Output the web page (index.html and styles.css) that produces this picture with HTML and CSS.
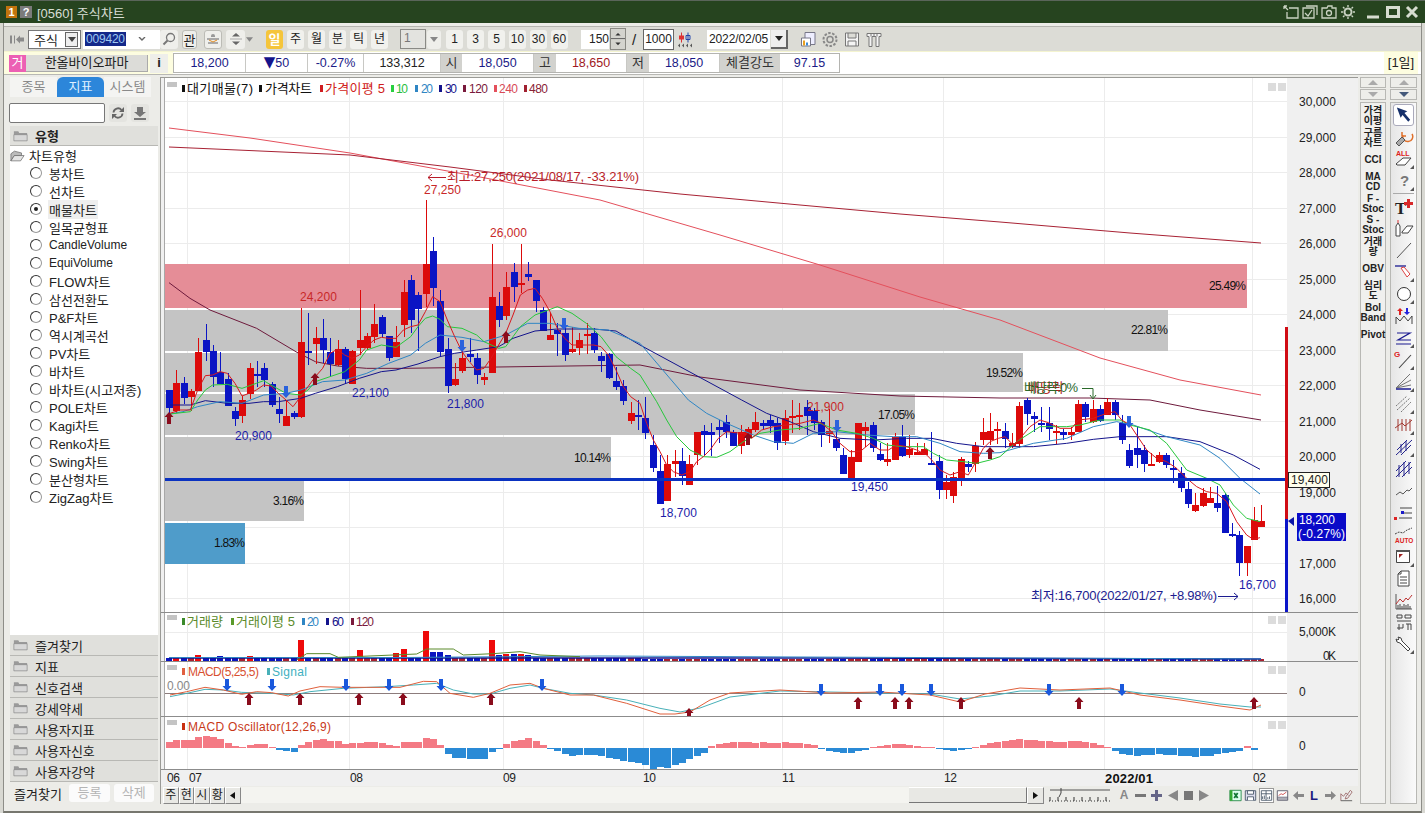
FILE: index.html
```html
<!DOCTYPE html>
<html lang="ko">
<head>
<meta charset="utf-8">
<title>[0560] 주식차트</title>
<link rel="stylesheet" href="styles.css">
</head>
<body>
<div class="app">
  <header class="title">
    <span class="badge b-or">1</span><span class="badge b-gr">?</span>
    <span class="title-text">[0560] 주식차트</span>
    <div class="win-btns">
      <svg class="wi" viewBox="0 0 16 14"><path d="M1 1l4 4M1 1h3M1 1v3M6 3h9v10H4V7" fill="none" stroke="#c9d2c2" stroke-width="1.3"/></svg>
      <svg class="wi" viewBox="0 0 16 14"><path d="M4 1h11v9M1 3h11v10H1zM3 8l3 3 4-6" fill="none" stroke="#c9d2c2" stroke-width="1.3"/></svg>
      <svg class="wi" viewBox="0 0 16 14"><path d="M1 3h5l1-2h4v2h4v10H1z" fill="none" stroke="#c9d2c2" stroke-width="1.3"/><circle cx="8" cy="8" r="2.5" fill="none" stroke="#c9d2c2" stroke-width="1.3"/></svg>
      <svg class="wi" viewBox="0 0 16 14"><circle cx="8" cy="7" r="3.5" fill="none" stroke="#c9d2c2" stroke-width="2"/><path d="M8 0v2M8 12v2M1 7h2M13 7h2M3 2l1.500 1.500M13 2l-1.500 1.500M3 12l1.500-1.500M13 12l-1.500-1.500" stroke="#c9d2c2" stroke-width="1.4"/></svg>
      <svg class="wc w-min" viewBox="0 0 14 14"><path d="M0 12h12" stroke="#d6dcd0" stroke-width="3"/></svg>
      <svg class="wc" viewBox="0 0 14 14"><path d="M1.500 2.500h11v9h-11z" fill="none" stroke="#d6dcd0" stroke-width="3"/></svg>
      <svg class="wc" viewBox="0 0 14 14"><path d="M2 2l10 10M12 2L2 12" stroke="#d6dcd0" stroke-width="3"/></svg>
    </div>
  </header>
  <div class="frame">
    <div class="toolbar">
      <div class="tb w16 ml1"><svg class="fill" viewBox="0 0 16 14"><path d="M1 3h2v8H1zM5 3h1v8H5zM7 7l4-4v2h4v4h-4v2z" fill="#8a8a8a"/></svg></div>
      <div class="combo w53 ml3"><span class="combo-t">주식</span><span class="combo-b"><svg viewBox="0 0 8 5" class="dn"><path d="M0 0h8L4 5z" fill="#444"/></svg></span></div>
      <div class="code w77 ml2"><span class="sel">009420</span><svg class="chev" viewBox="0 0 8 5"><path d="M1 0l3 3 3-3" fill="none" stroke="#666" stroke-width="1.400"/></svg></div>
      <div class="tb w18 pill"><svg class="ic14" viewBox="0 0 14 14"><circle cx="8.500" cy="5.500" r="4" fill="none" stroke="#777" stroke-width="1.300"/><path d="M5.500 8.500L1.500 12.500" stroke="#777" stroke-width="2"/></svg></div>
      <div class="tb w15 ml4 pill bd">관</div>
      <div class="tb w18 ml7 pill bd"><svg class="ic14" viewBox="0 0 14 14"><path d="M5 4a2 2 0 014 0v1H5z" fill="#999"/><path d="M1 6h12v2H1zM2 10h10v2H2z" fill="#aaa"/><path d="M3 8l4 2 4-2" fill="none" stroke="#e08a20"/></svg></div>
      <div class="tb w19 ml4 pill"><svg class="ic14" viewBox="0 0 14 14"><path d="M7 1l4 3.500H3zM7 13l-4-3.500h8z" fill="#666"/><path d="M1 7h12" stroke="#aaa"/></svg></div>
      <div class="tb w7 ml1"><svg class="dn" viewBox="0 0 8 5"><path d="M0 0h8L4 5z" fill="#888"/></svg></div>

      <div class="per on ml13">일</div><div class="per ml4">주</div><div class="per ml4">월</div><div class="per ml4">분</div><div class="per ml4">틱</div><div class="per ml4">년</div>

      <div class="num-in w26 ml12">1</div>
      <div class="tb w14 ml1 pill"><svg class="dn" viewBox="0 0 8 5"><path d="M0 0h8L4 5z" fill="#888"/></svg></div>
      <div class="per ml5">1</div><div class="per ml4">3</div><div class="per ml4">5</div><div class="per ml4">10</div><div class="per ml4">30</div><div class="per ml4">60</div>

      <div class="count w28 ml13">150</div>
      <div class="spin w16 ml1"><svg class="fill" viewBox="0 0 16 22"><path d="M0 10.500h16" stroke="#555"/><path d="M8 4l3 3H5zM8 18l-3-3h6z" fill="#333"/></svg></div>
      <div class="tb w16 slash">/</div>
      <div class="box w31 ml1">1000</div>
      <div class="tb w15 ml3"><svg class="fill" viewBox="0 0 15 18"><path d="M2 5h5v4H2z" fill="#d33"/><path d="M4.500 2v10" stroke="#d33"/><path d="M9 5h4v4H9z" fill="none" stroke="#24a"/><path d="M11 2v10" stroke="#24a"/><path d="M1 15l2-2v4zM5 15l2-2v4zM9 15l2-2v4zM13 15l2-2v4z" fill="#555"/></svg></div>
      <div class="date w63 ml15">2022/02/05</div>
      <div class="dbtn w17 ml1"><svg class="dn" viewBox="0 0 8 5"><path d="M0 0h8L4 5z" fill="#222"/></svg></div>
      <div class="tb w17 ml12"><svg class="fill" viewBox="0 0 17 18"><path d="M5 2h10v12H5z" fill="#eef" stroke="#778"/><path d="M1.500 7.500h9v8h-9z" fill="#fff" stroke="#778"/><path d="M3 10h2v5H3z" fill="#e8a020"/><path d="M6 12h2v3H6z" fill="#3a8ad8"/></svg></div>
      <div class="tb w18 ml4"><svg class="fill" viewBox="0 0 18 18"><circle cx="9" cy="9" r="3" fill="none" stroke="#888" stroke-width="1.500"/><circle cx="9" cy="9" r="6.500" fill="none" stroke="#888" stroke-width="2" stroke-dasharray="2.500 1.500"/></svg></div>
      <div class="tb w16 ml5"><svg class="fill" viewBox="0 0 16 18"><path d="M1.500 2.500h13v13h-13zM4 2.500v5h8v-5M4 15.500v-5h8v5" fill="#f4f4f4" stroke="#777"/></svg></div>
      <div class="tb w16 ml6"><svg class="fill" viewBox="0 0 16 18"><path d="M1 3h14v3h-2v10h-3V6H6v10H3V6H1z" fill="#f4f4f4" stroke="#777"/><path d="M5 3v3M8 3v3M11 3v3" stroke="#777"/></svg></div>
    </div>

    <div class="infobar">
      <div class="inf-left">
        <span class="tag">거</span>
        <div class="name">한올바이오파마</div>
        <div class="ibtn">i</div>
      </div>
      <div class="cells">
        <div class="cell navy c72">18,200</div>
        <div class="cell navy c62"><span class="down">▼</span>50</div>
        <div class="cell navy c56">-0.27%</div>
        <div class="cell dark c77">133,312</div>
        <div class="cell lab c21">시</div>
        <div class="cell navy c72">18,050</div>
        <div class="cell lab c22">고</div>
        <div class="cell dred c71">18,650</div>
        <div class="cell lab c22">저</div>
        <div class="cell navy c71">18,050</div>
        <div class="cell lab c60">체결강도</div>
        <div class="cell navy c59">97.15</div>
      </div>
      <div class="oneday">[1일]</div>
    </div>

    <div class="content">
      <aside class="side">
        <div class="tabs"><div class="tab">종목</div><div class="tab active">지표</div><div class="tab">시스템</div></div>
        <div class="search">
          <div class="search-in"></div>
          <div class="sbtn"><svg class="ic14" viewBox="0 0 14 14"><path d="M2.500 6.500A4.500 4.500 0 0110.500 4M11.500 7.500A4.500 4.500 0 013.500 10" fill="none" stroke="#666" stroke-width="1.800"/><path d="M13 1v5H8zM1 13V8h5z" fill="#666"/></svg></div>
          <div class="sbtn"><svg class="ic14" viewBox="0 0 14 14"><path d="M4 1h6v5h3l-6 5-6-5h3zM1 12h12v2H1z" fill="#777"/></svg></div>
        </div>
        <div class="acc acc-top"><svg class="folder" viewBox="0 0 17 13"><path d="M1 3V1h5l1 2h9v9H1z" fill="#9a9a9a"/><path d="M1 5h15v7H1z" fill="#d8d8d8" stroke="#777" stroke-width=".6"/></svg><b>유형</b></div>
        <div class="tree">
          <div class="tree-root"><svg class="folder" viewBox="0 0 17 13"><path d="M1 12V4l4-3 8 2v3H5z" fill="#bbb" stroke="#555" stroke-width=".7"/><path d="M1 12l4-6h11l-4 6z" fill="#e4e4e4" stroke="#555" stroke-width=".7"/></svg>차트유형</div>
          <div class="opt"><i class="radio"></i><span>봉차트</span></div>
          <div class="opt"><i class="radio"></i><span>선차트</span></div>
          <div class="opt sel-opt"><i class="radio on"></i><span>매물차트</span></div>
          <div class="opt"><i class="radio"></i><span>일목균형표</span></div>
          <div class="opt lat"><i class="radio"></i><span>CandleVolume</span></div>
          <div class="opt lat"><i class="radio"></i><span>EquiVolume</span></div>
          <div class="opt"><i class="radio"></i><span>FLOW차트</span></div>
          <div class="opt"><i class="radio"></i><span>삼선전환도</span></div>
          <div class="opt"><i class="radio"></i><span>P&amp;F차트</span></div>
          <div class="opt"><i class="radio"></i><span>역시계곡선</span></div>
          <div class="opt"><i class="radio"></i><span>PV차트</span></div>
          <div class="opt"><i class="radio"></i><span>바차트</span></div>
          <div class="opt"><i class="radio"></i><span>바차트(시고저종)</span></div>
          <div class="opt"><i class="radio"></i><span>POLE차트</span></div>
          <div class="opt"><i class="radio"></i><span>Kagi차트</span></div>
          <div class="opt"><i class="radio"></i><span>Renko차트</span></div>
          <div class="opt"><i class="radio"></i><span>Swing차트</span></div>
          <div class="opt"><i class="radio"></i><span>분산형차트</span></div>
          <div class="opt"><i class="radio"></i><span>ZigZag차트</span></div>
        </div>
        <div class="acc"><svg class="folder" viewBox="0 0 17 13"><path d="M1 3V1h5l1 2h9v9H1z" fill="#9a9a9a"/><path d="M1 5h15v7H1z" fill="#d8d8d8" stroke="#777" stroke-width=".6"/></svg>즐겨찾기</div>
        <div class="acc"><svg class="folder" viewBox="0 0 17 13"><path d="M1 3V1h5l1 2h9v9H1z" fill="#9a9a9a"/><path d="M1 5h15v7H1z" fill="#d8d8d8" stroke="#777" stroke-width=".6"/></svg>지표</div>
        <div class="acc"><svg class="folder" viewBox="0 0 17 13"><path d="M1 3V1h5l1 2h9v9H1z" fill="#9a9a9a"/><path d="M1 5h15v7H1z" fill="#d8d8d8" stroke="#777" stroke-width=".6"/></svg>신호검색</div>
        <div class="acc"><svg class="folder" viewBox="0 0 17 13"><path d="M1 3V1h5l1 2h9v9H1z" fill="#9a9a9a"/><path d="M1 5h15v7H1z" fill="#d8d8d8" stroke="#777" stroke-width=".6"/></svg>강세약세</div>
        <div class="acc"><svg class="folder" viewBox="0 0 17 13"><path d="M1 3V1h5l1 2h9v9H1z" fill="#9a9a9a"/><path d="M1 5h15v7H1z" fill="#d8d8d8" stroke="#777" stroke-width=".6"/></svg>사용자지표</div>
        <div class="acc"><svg class="folder" viewBox="0 0 17 13"><path d="M1 3V1h5l1 2h9v9H1z" fill="#9a9a9a"/><path d="M1 5h15v7H1z" fill="#d8d8d8" stroke="#777" stroke-width=".6"/></svg>사용자신호</div>
        <div class="acc"><svg class="folder" viewBox="0 0 17 13"><path d="M1 3V1h5l1 2h9v9H1z" fill="#9a9a9a"/><path d="M1 5h15v7H1z" fill="#d8d8d8" stroke="#777" stroke-width=".6"/></svg>사용자강약</div>
        <div class="side-foot"><span class="fav">즐겨찾기</span><div class="dis">등록</div><div class="dis">삭제</div></div>
      </aside>

      <main class="chart">
        <svg id="pm" class="pane h-main" viewBox="161 78 1197 535"></svg>
        <svg id="pv" class="pane h-vol" viewBox="161 613 1197 49"></svg>
        <svg id="pd" class="pane h-macd" viewBox="161 662 1197 55"></svg>
        <svg id="po" class="pane h-osc" viewBox="161 717 1197 53"></svg>
        <svg id="px" class="pane h-x" viewBox="161 770 1197 16"></svg>
        <div class="bottom">
          <div class="bt">주</div><div class="bt">현</div><div class="bt">시</div><div class="bt">황</div>
          <div class="bt arrow"><svg class="tri" viewBox="0 0 5 7"><path d="M5 0v7L0 3.500z" fill="#111"/></svg></div>
          <div class="track"><div class="thumb"></div></div>
          <div class="bt arrow a17"><svg class="tri" viewBox="0 0 5 7"><path d="M0 0v7l5-3.500z" fill="#111"/></svg></div>
          <svg class="slider" viewBox="0 0 62 16"><path d="M1 3h60" stroke="#555"/><path d="M12 1v5l-2 4" fill="none" stroke="#444"/><path d="M0 14h62" stroke="#333" stroke-dasharray="1 2"/><path d="M1 10v4M9 10v4M17 10v4M25 10v4M33 10v4M41 10v4M49 10v4M57 10v4" stroke="#333"/></svg>
          <div class="bi ml7 letter">A</div>
          <svg class="bi ml3" viewBox="0 0 13 13"><path d="M1 5h11v3H1z" fill="#777"/></svg>
          <svg class="bi ml3" viewBox="0 0 13 13"><path d="M5 1h3v4h4v3H8v4H5V8H1V5h4z" fill="#668"/></svg>
          <svg class="bi ml3" viewBox="0 0 13 13"><path d="M12 1v11L2 6.500z" fill="#888"/></svg>
          <svg class="bi ml3" viewBox="0 0 13 13"><path d="M2 2h9v9H2z" fill="#777"/></svg>
          <svg class="bi ml3" viewBox="0 0 13 13"><path d="M1 1v11l10-5.500z" fill="#888"/></svg>
          <svg class="bi ml18" viewBox="0 0 15 14"><path d="M1 1h13v12H1z" fill="#dfe" stroke="#284"/><path d="M6 4l4 6M10 4l-4 6" stroke="#173" stroke-width="2"/><path d="M1 1h3v12H1z" fill="#3a3"/></svg>
          <svg class="bi ml2" viewBox="0 0 15 14"><path d="M1.500 1.500h12v11h-12z" fill="#dde" stroke="#456"/><path d="M4 1.500h7v4H4zM4 12.500v-4h7v4" fill="#fff" stroke="#456"/></svg>
          <svg class="bi ml3 press" viewBox="0 0 15 14"><path d="M1.500 1.500h12v11h-12zM1.500 5h12M7 1.500V12.500" fill="#fff" stroke="#456"/><path d="M3 11V8M5 11V7M9 11V9M11 11V8" stroke="#456"/></svg>
          <svg class="bi ml3" viewBox="0 0 15 14"><path d="M1.500 1.500h12v11h-12zM1.500 9h12M1.500 11h12" fill="#fff" stroke="#556"/><path d="M3 7l3-2 2 1 4-3" fill="none" stroke="#c44"/></svg>
          <svg class="bi ml3" viewBox="0 0 13 13"><path d="M1 6.500L6 2v3h6v3H6v3z" fill="#888"/></svg>
          <div class="bi ml3 letter-l">L</div>
          <svg class="bi ml3" viewBox="0 0 13 13"><path d="M12 6.500L7 2v3H1v3h6v3z" fill="#888"/></svg>
          <svg class="bi ml3" viewBox="0 0 15 14"><path d="M1 13V5l3 3 3-4 3 3M12 1l2 2-5 7-3 1 1-3z" fill="#eee" stroke="#966"/><path d="M1 13h13" stroke="#555"/></svg>
        </div>
      </main>

      <div class="col ind-col">
        <div class="updown"><div class="ud"><svg class="ud-i" viewBox="0 0 12 6"><path d="M6 0l6 6H0z" fill="#aaa"/></svg></div><div class="ud"><svg class="ud-i" viewBox="0 0 12 6"><path d="M6 6L0 0h12z" fill="#aaa"/></svg></div></div>
        <div class="ind-list">
          <div class="ind">가격<br>이평</div>
          <div class="ind">구름<br>차트</div>
          <div class="ind">CCI</div>
          <div class="ind">MA<br>CD</div>
          <div class="ind">F -<br>Stoc</div>
          <div class="ind">S -<br>Stoc</div>
          <div class="ind">거래<br>량</div>
          <div class="ind">OBV</div>
          <div class="ind">심리<br>도</div>
          <div class="ind">Bol<br>Band</div>
          <div class="ind">Pivot</div>
        </div>
      </div>

      <div class="col tool-col">
        <div class="updown"><div class="ud"><svg class="ud-i" viewBox="0 0 12 6"><path d="M6 0l6 6H0z" fill="#aaa"/></svg></div><div class="ud"><svg class="ud-i" viewBox="0 0 12 6"><path d="M6 6L0 0h12z" fill="#44597a"/></svg></div></div>
        <div class="tool-list">
          <div class="tool pressed"><svg viewBox="0 0 20 20"><path d="M3 2l11 4-3 2 6 7-2 2-6-7-2 3z" fill="#16306a"/></svg></div>
          <div class="tool"><svg viewBox="0 0 20 20"><path d="M9 8a5 5 0 109-1M8 5v4h4" fill="none" stroke="#e0702a" stroke-width="1.500"/><path d="M2 16l6-6 3 3-6 6z" fill="#aaa" stroke="#555"/></svg></div>
          <div class="tool"><svg viewBox="0 0 20 20"><text x="2" y="7" class="alltxt">ALL</text><path d="M2 15l7-6h8l-6 7H3z" fill="#fff" stroke="#444"/><path d="M16 20h4v-4z" fill="#555"/></svg></div>
          <div class="tool"><svg viewBox="0 0 20 20"><text x="6" y="15" class="qtxt">?</text><path d="M16 20h4v-4z" fill="#555"/></svg></div>
          <div class="tool-sep"></div>
          <div class="tool"><svg viewBox="0 0 20 20"><text x="1" y="17" class="ttxt">T</text><path d="M13 2h3v3h3v3h-3v3h-3V8h-3V5h3z" fill="#d8282a"/></svg></div>
          <div class="tool"><svg viewBox="0 0 20 20"><path d="M2 18V8l2-3 2 3v10zM8 14l5-6h6l-5 7H8z" fill="#fff" stroke="#444"/><path d="M4 2v3" stroke="#d33"/></svg></div>
          <div class="tool"><svg viewBox="0 0 20 20"><path d="M3 18L17 3" stroke="#555"/></svg></div>
          <div class="tool"><svg viewBox="0 0 20 20"><path d="M1 4h11" stroke="#1a1a90" stroke-width="1.300"/><path d="M7 6l3-1 6 7-3 3z" fill="#fff" stroke="#d44"/><path d="M16 20h4v-4z" fill="#555"/></svg></div>
          <div class="tool"><svg viewBox="0 0 20 20"><circle cx="10" cy="10" r="6.500" fill="#fff" stroke="#333"/><path d="M16 20h4v-4z" fill="#555"/></svg></div>
          <div class="tool"><svg viewBox="0 0 20 20"><path d="M6 2l3 3H7v4H5V5H3z" fill="#d22"/><path d="M13 9l-3-3h2V2h2v4h2z" fill="#22d"/><path d="M2 18V11l4 4 4-5 4 5 4-5v8" fill="none" stroke="#444"/></svg></div>
          <div class="tool"><svg viewBox="0 0 20 20"><path d="M3 5h13L4 12h13M2 16h15" fill="none" stroke="#1a1a90" stroke-width="1.200"/><path d="M16 20h4v-4z" fill="#555"/></svg></div>
          <div class="tool"><svg viewBox="0 0 20 20"><text x="0" y="7" class="gtxt">G</text><path d="M5 18L17 5" stroke="#444" stroke-width="1.100"/><path d="M16 20h4v-4z" fill="#555"/></svg></div>
          <div class="tool"><svg viewBox="0 0 20 20"><path d="M2 16L16 2M2 16l15-8M2 16l15-3" stroke="#777"/><path d="M2 17h15" stroke="#1a1a90" stroke-width="1.500"/><path d="M16 20h4v-4z" fill="#555"/></svg></div>
          <div class="tool"><svg viewBox="0 0 20 20"><path d="M2 12L13 2M3 16L16 4M7 18L17 8" stroke="#777" stroke-dasharray="2 1"/><path d="M16 20h4v-4z" fill="#555"/></svg></div>
          <div class="tool"><svg viewBox="0 0 20 20"><path d="M4 4v12M8 4v12M12 4v12M16 4v12" stroke="#a03830"/><path d="M1 13l7-5 3 3 7-6" fill="none" stroke="#a03830"/><path d="M16 20h4v-4z" fill="#555"/></svg></div>
          <div class="tool"><svg viewBox="0 0 20 20"><path d="M2 18L18 3M3 13L13 3M7 18L17 8M7 7v9M12 4v10" stroke="#24248c" fill="none"/><path d="M16 20h4v-4z" fill="#555"/></svg></div>
          <div class="tool"><svg viewBox="0 0 20 20"><path d="M2 18L17 3M2 12L12 2M8 18L18 8M5 6v12M10 3v14M15 3v12" stroke="#24248c" fill="none"/></svg></div>
          <div class="tool"><svg viewBox="0 0 20 20"><path d="M2 14l4-3 3 2 4-4 2 1 3-3" fill="none" stroke="#555"/></svg></div>
          <div class="tool"><svg viewBox="0 0 20 20"><path d="M6 5h12M8 10h10M5 15h13" stroke="#444"/><rect x="7" y="8" width="3" height="3" fill="#1a1ac8"/><rect x="0" y="14" width="3" height="3" fill="#d22"/></svg></div>
          <div class="tool"><svg viewBox="0 0 20 20"><text x="1" y="18" class="autotxt">AUTO</text><path d="M1 9l4-2 4 1 4-3 5-2" fill="none" stroke="#444" stroke-dasharray="2 1"/></svg></div>
          <div class="tool"><svg viewBox="0 0 20 20"><path d="M2.500 3.500h13v12h-13z" fill="#fff" stroke="#444"/><path d="M2 3h14v2H2z" fill="#555"/><path d="M5 7h4L5 11z" fill="#a02020"/><path d="M16 20h4v-4z" fill="#555"/></svg></div>
          <div class="tool"><svg viewBox="0 0 20 20"><path d="M7 2h8v15H4V5zM7 2v3H4M6 8h7M6 11h7M6 14h7" fill="#fff" stroke="#444"/></svg></div>
          <div class="tool"><svg viewBox="0 0 20 20"><path d="M2 3v15h16" fill="none" stroke="#555"/><path d="M4 18v-4M6 18v-5M8 18v-3M10 18v-5M12 18v-4M14 18v-5M16 18v-3" stroke="#444"/><path d="M2 13l4-5 3 3 3-4 2 2 4-5" fill="none" stroke="#b33"/></svg></div>
          <div class="tool"><svg viewBox="0 0 20 20"><path d="M3 3h5v3H3zM11 3h6v3h-6zM3 9h14M5 12v6M9 12v4H3M12 12h5v6M14 12v6" fill="none" stroke="#444"/></svg></div>
          <div class="tool"><svg viewBox="0 0 20 20"><path d="M4 3l3 1 1 3 8 8-2 2-8-8-3-1-1-3 2 1 1-1z" fill="#fff" stroke="#444"/><path d="M16 20h4v-4z" fill="#555"/></svg></div>
        </div>
      </div>
    </div>
  </div>
</div>
<script src="chart.js"></script>
</body>
</html>
```
FILE: styles.css
```css
* { box-sizing: border-box; }
html, body { margin: 0; padding: 0; background: #d8d8d2; }
body { font: 12px "Liberation Sans", "Noto Sans CJK KR", sans-serif; color: #222; }
.app { width: 1425px; height: 813px; overflow: hidden; background: #d8d8d2; display: flex; flex-direction: column; }

.title { height: 23px; flex: none; background: #26441f; border-top: 1px solid #5a655a; display: flex; align-items: center; padding-left: 6px; }
.badge { width: 11px; height: 12px; color: #fff; font-weight: 700; font-size: 11px; line-height: 12px; text-align: center; }
.b-or { background: #c2740e; }
.b-gr { background: #7b7b7b; margin-left: 3px; width: 12px; }
.title-text { margin-left: 5px; font-size: 13px; color: #d8ded4; }
.win-btns { margin-left: auto; display: flex; align-items: center; padding-right: 6px; }
.wi { width: 16px; height: 14px; margin-right: 3px; }
.wc { width: 14px; height: 14px; margin-left: 5px; }
.w-min { margin-left: 8px; }

.frame { flex: 1; min-height: 0; margin-left: 3px; width: 1419px; border-left: 1px solid #8d8d88; border-right: 1px solid #8d8d88; border-bottom: 2px solid #77776f; padding: 3px 3px 0 4px; background: #ececE8; display: flex; flex-direction: column; }

.toolbar { height: 25px; flex: none; display: flex; align-items: center; background: #dcdcd6; margin: 0 -3px 0 -4px; padding-left: 4px; border-top: 1px solid #b5b5b0; }
.tb { height: 19px; display: flex; align-items: center; justify-content: center; flex: none; font-size: 13px; }
.pill { background: #efefeb; border-radius: 3px; }
.bd { border: 1px solid #bcbcb6; }
.fill { width: 100%; height: 100%; }
.ic14 { width: 14px; height: 14px; }
.dn { width: 8px; height: 5px; }
.chev { width: 8px; height: 5px; margin-left: auto; margin-right: 14px; }

.w7 { width: 7px; } .w14 { width: 14px; } .w15 { width: 15px; } .w16 { width: 16px; } .w17 { width: 17px; } .w18 { width: 18px; } .w19 { width: 19px; }
.w26 { width: 26px; } .w28 { width: 28px; } .w31 { width: 31px; } .w53 { width: 53px; } .w63 { width: 63px; } .w77 { width: 77px; }
.ml1 { margin-left: 1px; } .ml2 { margin-left: 2px; } .ml3 { margin-left: 3px; } .ml4 { margin-left: 4px; } .ml5 { margin-left: 5px; } .ml6 { margin-left: 6px; } .ml7 { margin-left: 7px; }
.ml12 { margin-left: 12px; } .ml13 { margin-left: 13px; } .ml15 { margin-left: 15px; } .ml18 { margin-left: 18px; }

.combo { height: 19px; flex: none; background: #fff; border: 1px solid #777; display: flex; align-items: center; font-size: 13px; }
.combo-t { padding-left: 5px; flex: 1; }
.combo-b { width: 13px; height: 15px; margin-right: 2px; background: #eee; border: 1px solid #666; display: flex; align-items: center; justify-content: center; }
.code { height: 19px; flex: none; background: #fff; display: flex; align-items: center; padding-left: 2px; }
.sel { background: #14288a; color: #9fc8f0; padding: 0 1px; font-size: 12px; line-height: 14px; letter-spacing: -.2px; }
.per { width: 17px; height: 19px; flex: none; background: #f1f1ed; border-radius: 3px; text-align: center; line-height: 19px; font-size: 12px; }
.per.on { background: #f5c53a; color: #fff; font-weight: 700; font-size: 13px; }
.num-in { height: 20px; flex: none; background: #e3e3df; border: 1px solid #8a8a86; padding-left: 3px; line-height: 16px; color: #777; }
.count { height: 19px; flex: none; background: #fff; text-align: right; line-height: 19px; font-size: 12px; }
.spin { height: 22px; flex: none; background: #d4d4ce; border: 1px solid #8a8a84; }
.slash { font-size: 15px; }
.box { height: 21px; flex: none; background: #fff; border: 1px solid #666; text-align: center; line-height: 18px; font-size: 12px; }
.date { height: 19px; flex: none; background: #fff; text-align: center; line-height: 19px; font-size: 12px; letter-spacing: -.1px; }
.dbtn { height: 19px; flex: none; background: #eee; border-right: 2px solid #666; border-bottom: 2px solid #666; display: flex; align-items: center; justify-content: center; }

.infobar { height: 24px; flex: none; display: flex; background: #fff; margin: 0 -3px 0 -4px; border-top: 1px solid #f4f4d0; border-bottom: 1px solid #b8b8b4; }
.inf-left { width: 169px; padding-left: 5px; background: #fdfde0; display: flex; align-items: center; flex: none; }
.tag { width: 17px; height: 17px; background: #ec60b4; color: #fff; text-align: center; font-size: 13px; line-height: 16px; flex: none; }
.name { width: 122px; height: 17px; background: #dcdcd8; text-align: center; font-size: 13px; line-height: 16px; flex: none; border-right: 1px solid #aaa; border-bottom: 1px solid #aaa; }
.ibtn { width: 18px; height: 19px; margin-left: 2px; background: #eeeeea; text-align: center; font-weight: 700; font-size: 13px; line-height: 18px; flex: none; }
.cells { display: flex; height: 20px; margin-top: 1px; margin-left: 0; flex: none; border: 1px solid #b4b4b0; border-right-width: 1px; }
.cell { text-align: center; line-height: 18px; font-size: 12.500px; border-right: 1px solid #c8c8c4; flex: none; }
.navy { color: #1a1a86; } .dark { color: #222; } .dred { color: #a01822; }
.lab { background: #d2d2ce; color: #333; font-size: 13px; border-right: none; }
.down { font-size: 15px; line-height: 16px; color: #14148c; font-family: "DejaVu Sans", sans-serif; }
.c72 { width: 72px; } .c62 { width: 62px; } .c56 { width: 56px; } .c77 { width: 77px; } .c21 { width: 21px; } .c22 { width: 22px; } .c71 { width: 71px; } .c60 { width: 60px; } .c59 { width: 59px; border-right: none; }
.oneday { margin-left: auto; width: 34px; background: #fdfde0; text-align: center; font-size: 13px; line-height: 22px; margin-right: 3px; }

.content { flex: 1; min-height: 0; display: flex; margin-top: 2px; padding-bottom: 7px; align-items: stretch; }
.side { width: 150px; flex: none; margin-right: 2px; display: flex; flex-direction: column; }
.tabs { display: flex; height: 20px; padding-left: 2px; flex: none; }
.tab { width: 47px; text-align: center; line-height: 19px; background: #f4f4f2; color: #8a8a8a; font-size: 13px; }
.tab.active { background: #2c86da; color: #dff0ff; border-radius: 6px 6px 0 0; }
.search { height: 25px; display: flex; align-items: center; margin-top: 3px; padding-left: 1px; flex: none; }
.search-in { width: 96px; height: 20px; background: #fff; border: 1px solid #777; border-radius: 2px; }
.sbtn { width: 18px; height: 18px; margin-left: 4px; background: #e4e4e0; border-radius: 3px; display: flex; align-items: center; justify-content: center; }
.acc { height: 21px; margin-left: 2px; flex: none; background: #e0e0dc; border-bottom: 1px solid #b8b8b4; display: flex; align-items: center; padding-left: 3px; font-size: 13px; }
.acc-top { margin-top: 1px; height: 20px; }
.folder { width: 15px; height: 12px; margin-right: 7px; flex: none; }
.tree { flex: 1; min-height: 0; margin-left: 2px; background: #fff; padding-top: 1px; font-size: 13px; }
.tree-root { height: 17px; display: flex; align-items: center; }
.tree-root .folder { margin-right: 4px; }
.opt { height: 18px; display: flex; align-items: center; padding-left: 20px; }
.opt span { margin-left: 6px; padding: 0 1px; }
.lat span { font-size: 12px; }
.sel-opt span { background: #eee; }
.radio { width: 12px; height: 12px; border-radius: 50%; border: 1.500px solid #333; background: #fff; display: block; flex: none; border-right-color: #999; border-bottom-color: #999; position: relative; }
.radio.on::after { content: ""; position: absolute; left: 2.500px; top: 2.500px; width: 4px; height: 4px; border-radius: 50%; background: #222; }
.side-foot { height: 22px; margin-left: 2px; flex: none; display: flex; align-items: center; font-size: 13px; }
.fav { width: 58px; padding-left: 4px; white-space: nowrap; margin-right: 2px; }
.dis { width: 41px; height: 18px; background: #fbfbfb; color: #b4b4b4; text-align: center; line-height: 17px; border-radius: 3px; margin-right: 4px; }

.chart { width: 1198px; flex: none; display: flex; flex-direction: column; border-left: 1px solid #9a9a96; border-top: 1px solid #9a9a96; }
.pane { display: block; width: 1197px; flex: none; }
.h-main { height: 535px; } .h-vol { height: 49px; } .h-macd { height: 55px; } .h-osc { height: 53px; } .h-x { height: 16px; }
.t { font: 12px "Liberation Sans", "Noto Sans CJK KR", sans-serif; }
.tn { font: 12px "Liberation Sans", sans-serif; }
.tk { font: 13px "Liberation Sans", "Noto Sans CJK KR", sans-serif; }
.tb2 { font: 700 13px "Liberation Sans", "Noto Sans CJK KR", sans-serif; }

.bottom { height: 18px; display: flex; align-items: center; padding-left: 2px; flex: none; }
.bt { width: 15.500px; height: 17px; background: #e8e8e4; border: 1px solid #888; border-left-color: #fff; border-top-color: #fff; text-align: center; line-height: 15px; font-size: 12px; flex: none; }
.arrow { display: flex; align-items: center; justify-content: center; }
.a17 { width: 17px; }
.tri { width: 5px; height: 7px; }
.track { width: 786px; height: 16px; background: #f4f4f0; flex: none; display: flex; justify-content: flex-end; }
.thumb { width: 118px; height: 16px; background: #e8e8e4; border-right: 1px solid #777; border-bottom: 1px solid #777; border-top: 1px solid #fff; }
.slider { width: 62px; height: 16px; margin-left: 5px; flex: none; }
.bi { width: 13px; height: 13px; flex: none; }
.letter { font-weight: 700; color: #888; font-size: 12px; line-height: 13px; text-align: center; }
.letter-l { font-weight: 700; color: #1a1a80; font-size: 13px; line-height: 13px; text-align: center; }
.press { background: #fff; outline: 1px solid #999; }

.col { flex: none; display: flex; flex-direction: column; }
.ind-col { width: 26px; margin-left: 2px; }
.tool-col { width: 27px; margin-left: 4px; }
.updown { height: 25px; flex: none; display: flex; flex-direction: column; gap: 1px; }
.ud { height: 11px; background: #eeeeea; border: 1px solid #b8b8b4; display: flex; align-items: center; justify-content: center; }
.ud-i { width: 12px; height: 5px; }
.ind-list { flex: 1; background: #f0f0ee; border: 1px solid #b8b8b4; padding-top: 2px; }
.ind { height: 21.900px; display: flex; align-items: center; justify-content: center; text-align: center; font-size: 10px; line-height: 10px; font-weight: 700; color: #222; }
.tool-list { flex: 1; border: 1px solid #b8b8b4; background: linear-gradient(90deg, #e6e6e6, #fafafa); padding-top: 1px; }
.tool { height: 21.900px; display: flex; align-items: center; justify-content: center; }
.tool svg { width: 20px; height: 20px; }
.tool.pressed { background: #fff; border: 1px solid #aab; border-radius: 3px; margin: 0 2px; }
.tool-sep { height: 0; border-top: 1px solid #aaa; margin: 1px 2px 2px; }
.alltxt { font: 700 7px "Liberation Sans", sans-serif; fill: #d22; }
.qtxt { font: 700 15px "Liberation Sans", sans-serif; fill: #777; }
.ttxt { font: 700 17px "Liberation Serif", serif; fill: #222; }
.gtxt { font: 700 8px "Liberation Sans", sans-serif; fill: #d22; }
.autotxt { font: 700 6.500px "Liberation Sans", sans-serif; fill: #d22; }
```
FILE: chart.js
```javascript
(function () {
  var NS = 'http://www.w3.org/2000/svg';
  function add(p, tag, a, txt) {
    var e = document.createElementNS(NS, tag);
    for (var k in a) e.setAttribute(k, a[k]);
    if (txt !== undefined) e.textContent = txt;
    p.appendChild(e);
    return e;
  }
  function rect(p, x, y, w, h, f) { return add(p, 'rect', { x: x, y: y, width: w, height: h, fill: f, 'shape-rendering': 'crispEdges' }); }
  function line(p, x1, y1, x2, y2, c, w) { return add(p, 'line', { x1: x1, y1: y1, x2: x2, y2: y2, stroke: c, 'stroke-width': w || 1, 'shape-rendering': 'crispEdges' }); }
  function poly(p, pts, c, w) { return add(p, 'polyline', { points: pts.map(function (q) { return q.join(','); }).join(' '), fill: 'none', stroke: c, 'stroke-width': w || 1, 'stroke-linejoin': 'round' }); }
  function text(p, x, y, s, c, len, cls, anchor) {
    var a = { x: x, y: y, fill: c, 'class': cls || 't' };
    if (len) a.textLength = len;
    if (anchor) a['text-anchor'] = anchor;
    return add(p, 'text', a, s);
  }
  function seg(x0, y0, f) { var o = []; for (var i = 0; i < f.length; i += 2) o.push([x0 + f[i] / 3, y0 + f[i + 1] / 3]); return o; }
  function X(i) { return Math.round(169 + 7.33 * i); }
  var MONTHS = [187, 349, 503, 643, 782, 943, 1104, 1252];

  function pane(svg, top, bottom) {
    rect(svg, 161, top, 1197, bottom - top, '#f0f0f0');
    rect(svg, 165, top, 1122, bottom - top, '#fff');
    line(svg, 164.5, top, 164.5, bottom, '#a8a8a8');
    MONTHS.forEach(function (x) { line(svg, x + .5, top, x + .5, bottom, '#ececec'); });
  }
  function frameDecor(svg, top, bottom) {
    rect(svg, 167, top + 4, 10, 5, '#c4c4c4');
    rect(svg, 1268, top + 5, 8, 8, '#dcdcdc');
    rect(svg, 1278, top + 5, 8, 8, '#dcdcdc');
    line(svg, 161, bottom - .5, 1358, bottom - .5, '#8c8c8c');
  }
  function mark(svg, x, y, c) { rect(svg, x, y - 4, 3, 7, c); }

  /* ---------- price pane ---------- */
  var pm = document.getElementById('pm');
  pane(pm, 78, 613);
  function PY(k) { return 101 + 35.5 * k; }
  for (var k = 0; k < 15; k++) line(pm, 165, Math.round(PY(k)) + .5, 1287, Math.round(PY(k)) + .5, '#ececec');

  [[264, 44, 1247, '#e58d97', '25.49%', 285],
   [310, 41, 1168, '#c4c4c4', '22.81%', 329],
   [353, 39, 1023, '#c4c4c4', '19.52%', 372],
   [394, 41, 915, '#c4c4c4', '17.05%', 414],
   [437, 41, 611, '#c4c4c4', '10.14%', 457],
   [481, 40, 304, '#c4c4c4', '3.16%', 500],
   [523, 41, 245, '#4f9cca', '1.83%', 542]].forEach(function (b) {
    rect(pm, 165, b[0], b[2] - 165, b[1], b[3]);
  });

  var L120 = seg(160, 230, [27,158,90,205,150,240,290,295,411,367,466,395,532,408,620,415,730,415]).concat([[640,365],[700,377],[800,390],[900,396],[1000,398],[1090,398],[1150,400],[1200,410],[1261,420]]);
  poly(pm, [[169,128],[250,138],[350,153],[480,177],[600,200],[720,235],[820,265],[920,297],[1000,320],[1100,358],[1180,380],[1261,395]], '#e4505c');
  poly(pm, [[169,147],[260,151],[350,155],[450,167],[550,180],[680,194],[800,205],[900,214],[1000,222],[1130,233],[1261,243]], '#a82234');
  poly(pm, L120, '#6e1a3c');

  var A = [[0,480,480,535,560],[1,420,460,545,550],[0,440,460,505,520],[1,478,484,503,545],[1,325,367,485,485],[0,283,330,365,395],[0,345,363,442,470],[0,365,427,462,462],[0,430,448,530,530],[0,530,543,567,588],[1,498,510,558,578],[1,398,414,493,505],[0,393,432,437,470],[0,398,414,450,470],[0,455,462,525,530],[0,500,537,551,578],[1,510,558,587,587],[0,543,549,561,567],[1,235,336,560,565],[0,250,363,369,405],[1,290,324,342,400],[0,268,324,360,400],[0,325,366,403,438],[1,330,358,407,407],[0,350,358,448,460],[1,360,364,462,462],[1,180,331,354,375],[1,310,319,354,360],[1,222,282,320,340],[0,255,260,312,325],[0,318,319,386,393],[1,288,336,380,382],[1,150,186,284,320],[0,135,150,270,310],[0,185,195,236,362],[1,-90,102,193,230],[0,22,64,174,230],[0,180,214,367,378],[0,325,358,470,490],[1,400,448,465,470],[1,350,385,425,428],[0,325,372,381,398],[0,368,385,437,462],[1,428,442,450,465],[1,42,201,428,430],[0,185,228,270,290],[1,125,171,258,268],[0,98,127,172,215],[1,42,160,166,190],[0,97,132,140,155],[0,150,151,215,245],[0,230,240,303,303],[1,250,316,331,331],[0,280,300,311,380],[0,270,309,375,393],[1,290,357,365,368],[1,310,331,354,375],[1,280,311,317,372],[0,295,309,360,370],[0,365,378,394,425],[0,370,372,445,448],[0,410,453,470,480],[0,450,468,513,525],[1,517,549,572,582],[0,510,556,560,600]];
  var B = [[0,-10,55,100,115],[0,105,135,205,215],[0,165,213,312,312],[1,165,192,302,302],[1,150,183,191,230],[0,145,183,228,255],[1,165,192,254,254],[1,95,96,165,195],[0,75,93,105,165],[0,70,96,105,168],[0,60,82,90,130],[0,45,67,98,115],[0,90,95,137,137],[1,75,95,137,163],[1,80,87,112,130],[1,35,67,90,95],[0,60,68,78,90],[0,45,60,78,100],[0,55,70,130,152],[1,30,55,125,135],[1,0,48,54,100],[1,10,45,50,90],[0,0,20,48,105],[0,25,33,68,90],[0,60,65,104,142],[1,28,92,100,130],[0,65,118,145,152],[0,145,165,222,222],[1,150,171,235,235],[1,68,68,185,185],[1,65,82,95,140],[0,65,75,145,155],[0,130,162,180,185],[1,130,178,186,200],[1,100,110,180,180],[0,75,110,168,172],[1,105,148,165,175],[1,130,155,165,165],[1,130,148,167,167],[0,97,188,191,192],[0,165,183,270,297],[1,225,246,270,297],[1,215,232,290,307],[1,172,178,235,260],[0,182,191,199,215],[1,125,137,192,215],[1,55,97,120,135],[1,40,93,120,135],[1,65,88,95,130]];
  var C = [[0,160,183,207,235],[1,190,220,228,235],[1,97,108,222,235],[0,85,90,132,165],[0,125,138,147,185],[0,110,160,162,185],[0,112,160,179,210],[1,165,183,188,222],[0,178,187,195,210],[1,170,187,195,210],[1,90,103,187,187],[0,95,102,140,155],[1,90,117,157,160],[0,105,118,155,155],[1,85,97,137,137],[0,90,97,137,150],[0,135,158,208,222],[0,222,241,290,295],[0,172,234,255,295],[0,225,240,281,305],[1,250,282,289,290],[1,245,255,275,278],[0,250,256,285,295],[0,270,295,302,338],[0,290,309,354,365],[0,335,357,402,413],[1,368,406,425,425],[1,355,370,408,412],[1,352,384,398,400],[0,348,398,413,425],[0,370,375,488,488],[0,460,493,496,503],[0,483,495,578,618],[1,528,528,578,618],[1,410,450,510,510],[1,405,453,472,472]];
  var candles = A.map(function (c) { return [c[0], 230 + c[1] / 3, 230 + c[2] / 3, 230 + c[3] / 3, 230 + c[4] / 3]; })
    .concat(B.map(function (c) { return [c[0], 400 + c[1] / 3, 400 + c[2] / 3, 400 + c[3] / 3, 400 + c[4] / 3]; }))
    .concat(C.map(function (c) { return [c[0], 370 + c[1] / 3, 370 + c[2] / 3, 370 + c[3] / 3, 370 + c[4] / 3]; }));
  candles.forEach(function (c, i) {
    var x = X(i), col = c[0] ? '#dc0a0a' : '#0a14c4';
    rect(pm, x, Math.round(c[1]), 1, Math.round(c[4] - c[1]), col);
    rect(pm, x - 3, Math.round(c[2]), 7, Math.max(2, Math.round(c[3] - c[2])), col);
  });

  var ma30 = seg(160, 230, [30,525,91,525,136,512,202,520,267,520,311,515,355,515,422,505,466,490,532,470,598,445,664,425,708,420,774,402,840,380,884,370,950,360,1016,350,1059,325,1125,303,1192,297,1301,297,1368,303,1440,345])
    .concat(seg(640, 400, [305,0,380,40,450,65,520,95,600,115,700,120,800,115,875,115,950,130,1030,140,1080,140]))
    .concat(seg(1000, 370, [100,230,200,220,280,208,360,200,500,200,600,215,700,255,780,298]));
  var ma20 = seg(160, 230, [30,552,69,545,113,530,180,515,246,520,311,495,378,490,422,480,488,455,554,450,620,430,686,400,752,375,796,340,840,315,906,322,972,335,1037,315,1103,280,1170,280,1257,295,1345,300,1440,340])
    .concat(seg(640, 400, [145,0,200,40,260,70,340,105,400,125,460,130,520,100,590,95,680,105,760,110,830,110,900,130,960,155,1030,160,1080,158]))
    .concat(seg(1000, 370, [100,220,200,205,280,170,350,155,400,165,500,200,600,225,660,265,720,325,780,372]));
  var ma10 = seg(160, 230, [30,552,91,545,113,510,136,480,158,465,202,463,246,475,289,460,311,452,333,465,378,490,422,495,444,480,466,455,510,440,554,425,598,390,620,360,664,345,708,352,752,320,774,290,796,265,818,258,840,268,862,290,906,295,950,315,972,335,1016,355,1037,350,1059,320,1081,290,1125,255,1192,230,1236,250,1279,280,1323,320,1368,380,1412,415,1440,435])
    .concat(seg(640, 400, [50,5,80,60,110,110,150,150,190,170,230,172,270,155,310,125,360,100,420,90,480,85,540,70,590,90,650,100,700,115,740,135,790,140,850,140,880,160,920,180,970,185,1010,190,1050,180,1080,170]))
    .concat(seg(1000, 370, [50,215,120,170,200,170,240,165,300,150,360,150,390,165,450,180,500,220,560,300,620,325,660,345,700,405,740,445,780,455]));
  var ma5 = seg(160, 230, [30,550,60,540,91,540,113,480,136,437,158,435,180,425,202,430,225,460,246,498,267,490,289,480,311,465,333,468,355,490,378,510,399,530,422,500,444,470,466,440,488,415,510,370,532,358,554,375,576,385,598,375,620,350,642,330,664,322,686,325,708,325,730,300,752,290,774,285,796,245,818,200,840,215,862,270,884,320,906,365,928,395,950,420,972,415,993,385,1016,345,1037,310,1059,255,1081,195,1103,180,1125,175,1147,205,1170,245,1192,295,1214,325,1236,345,1257,345,1279,345,1301,345,1323,350,1345,375,1368,420,1390,470,1412,500,1440,520])
    .concat(seg(640, 400, [20,70,40,120,60,155,80,195,100,215,125,225,150,215,170,185,190,170,210,150,235,115,260,95,285,98,310,100,335,115,365,90,400,80,440,75,480,70,520,60,545,70,575,95,600,130,630,155,660,155,690,130,720,150,745,150,770,135,800,140,830,150,860,165,880,185,900,210,930,225,960,215,985,225,1005,190,1030,145,1050,125,1075,115,1095,110]))
    .concat(seg(1000, 370, [40,225,60,205,90,170,120,150,145,158,180,175,215,175,235,150,280,145,320,130,345,125,365,150,390,165,420,210,440,240,470,265,500,275,530,295,560,325,590,350,620,365,650,370,680,395,710,455,740,495,760,508,780,503]));
  poly(pm, ma30, '#14148c');
  poly(pm, ma20, '#2f86c4');
  poly(pm, ma10, '#28c83c');
  poly(pm, ma5, '#d8181c');

  /* thick support line */
  rect(pm, 165, 478, 1122, 3, '#0a32c0');

  function arrowUp(p, x, y, c) { add(p, 'polygon', { points: [x, y - 6, x + 4.5, y - 1, x + 2, y - 1, x + 2, y + 6, x - 2, y + 6, x - 2, y - 1, x - 4.5, y - 1].join(' '), fill: c }); }
  function arrowDn(p, x, y, c) { add(p, 'polygon', { points: [x, y + 6, x + 4.5, y + 1, x + 2, y + 1, x + 2, y - 6, x - 2, y - 6, x - 2, y + 1, x - 4.5, y + 1].join(' '), fill: c }); }
  [[169, 418], [315, 379], [506, 337], [748, 439], [990, 453]].forEach(function (a) { arrowUp(pm, a[0], a[1], '#8a0c1c'); });
  [[286, 392], [462, 346], [564, 324], [837, 426], [1129, 422]].forEach(function (a) { arrowDn(pm, a[0], a[1], '#2a62dc'); });

  [[1246, 285, '25.49%'], [1168, 329, '22.81%'], [1023, 372, '19.52%'], [915, 414, '17.05%'], [611, 457, '10.14%'], [304, 500, '3.16%'], [245, 542, '1.83%']].forEach(function (p) {
    var len = p[2].length === 6 ? 37 : 31;
    text(pm, p[0] - len, p[1] + 5, p[2], '#111', len);
  });

  var RED = '#c82828', BLU = '#1c1ca8';
  [[424, 190, '27,250'], [490, 233, '26,000'], [300, 297, '24,200'], [807, 407, '21,900']].forEach(function (p) { text(pm, p[0], p[1] + 4, p[2], RED, 37); });
  [[235, 436, '20,900'], [352, 393, '22,100'], [447, 404, '21,800'], [660, 513, '18,700'], [851, 487, '19,450'], [1239, 585, '16,700']].forEach(function (p) { text(pm, p[0], p[1] + 4, p[2], BLU, 37); });

  line(pm, 428, 177.5, 446, 177.5, '#b81c28');
  add(pm, 'path', { d: 'M432 174l-4 3.500 4 3.500', fill: 'none', stroke: '#b81c28' });
  text(pm, 447, 181, '최고:27,250(2021/08/17, -33.21%)', '#b81c28', 192, 'tk');
  text(pm, 1031, 600, '최저:16,700(2022/01/27, +8.98%)', '#1c1c90', 186, 'tk');
  line(pm, 1218, 596.5, 1238, 596.5, '#1c1c90');
  add(pm, 'path', { d: 'M1234 593l4 3.500-4 3.500', fill: 'none', stroke: '#1c1c90' });

  text(pm, 1028, 392, '배당락', '#b02020', 36, 'tk');
  text(pm, 1024, 392, '배당락:0%', '#2a6a2a', 54, 'tk');
  add(pm, 'path', { d: 'M1082 388.500h11v9M1090 395l3 4 3-4', fill: 'none', stroke: '#2a6a2a' });

  /* axis: the 18,000 tick lies under the current-price tag, as in the reference */
  for (k = 0; k < 15; k++) { if (k !== 12) text(pm, 1299, PY(k) + 5, (30 - k) + ',000', '#222', 37); }
  rect(pm, 1285, 327, 3, 192, '#d00c14');
  rect(pm, 1285, 519, 3, 94, '#0a14c8');
  add(pm, 'rect', { x: 1288.5, y: 472.5, width: 41, height: 15, fill: '#ffffec', stroke: '#222', 'shape-rendering': 'crispEdges' });
  text(pm, 1291, 484, '19,400', '#222', 37);
  add(pm, 'polygon', { points: '1288,521 1294,517 1294,526', fill: '#0a14a8' });
  rect(pm, 1297, 513, 49, 28, '#0a0ac8');
  text(pm, 1299, 524, '18,200', '#fff', 36, 'tn');
  text(pm, 1298, 538, '(-0.27%)', '#fff', 47, 'tn');

  /* legend */
  [[182, '#111'], [259, '#111'], [320, '#d01c20'], [391, '#28d040'], [415, '#2f86c4'], [439, '#14148c'], [463, '#7a1a3c'], [494, '#e4505c'], [524, '#a02030']].forEach(function (m) { mark(pm, m[0], 89, m[1]); });
  text(pm, 187, 93, '대기매물(7)', '#111', 66, 'tk');
  text(pm, 265, 93, '가격차트', '#111', 47, 'tk');
  text(pm, 325, 93, '가격이평 5', '#d01c20', 60, 'tk');
  text(pm, 396, 93, '10', '#28c040', 12);
  text(pm, 421, 93, '20', '#2f86c4', 12);
  text(pm, 445, 93, '30', '#14148c', 12);
  text(pm, 469, 93, '120', '#7a1a3c', 19);
  text(pm, 499, 93, '240', '#d84a56', 19);
  text(pm, 529, 93, '480', '#8a2236', 19);
  frameDecor(pm, 78, 613);

  /* ---------- volume ---------- */
  var pv = document.getElementById('pv');
  pane(pv, 613, 662);
  line(pv, 165, 632.5, 1287, 632.5, '#ececec');
  var VH = { 1: 4, 4: 6, 7: 5, 11: 5, 18: 21, 19: 4, 26: 11, 32: 12, 31: 8, 35: 30, 36: 9, 37: 9, 38: 6, 44: 21, 45: 6, 46: 7, 47: 7, 48: 7, 49: 6 };
  candles.forEach(function (c, i) {
    var h = VH[i] || (i > 64 ? 2 : 3);
    var col = c[0] ? (i > 64 || !VH[i] ? '#a82030' : '#ee0a0a') : '#0a14c0';
    rect(pv, X(i) - 3, 661 - h, 6, h, col);
  });
  poly(pv, [[169,658],[600,658],[800,658],[1261,659]], '#14148c', 1.5);
  poly(pv, [[169,657.5],[400,657.5],[600,656],[800,657],[1261,659]], '#2f86c4');
  poly(pv, seg(160, 610, [410,150,440,131,510,131,535,142,770,132,800,117,880,117,910,135,1000,131,1080,125,1140,135,1260,140]), '#5a8a2a');
  [[182, '#3a8a2a'], [231, '#5a9a2a'], [302, '#2f86c4'], [326, '#14148c'], [351, '#7a1a3c']].forEach(function (m) { mark(pv, m[0], 622, m[1]); });
  text(pv, 187, 626, '거래량', '#5a8a2a', 36, 'tk');
  text(pv, 236, 626, '거래이평 5', '#5a8a2a', 59, 'tk');
  text(pv, 307, 626, '20', '#2f86c4', 12);
  text(pv, 332, 626, '60', '#14148c', 12);
  text(pv, 356, 626, '120', '#7a1a3c', 18);
  text(pv, 1299, 636, '5,000K', '#222', 37);
  text(pv, 1323, 660, '0K', '#222', 13);
  frameDecor(pv, 613 - 2, 662);

  /* ---------- MACD ---------- */
  var pd = document.getElementById('pd');
  pane(pd, 662, 717);
  line(pd, 165, 693.5, 1287, 693.5, '#8c7c7c');
  poly(pd, seg(160, 610, [30,260,80,250,135,238,190,240,245,247,335,250,400,255,450,245,550,235,680,230,760,225,830,220,880,240,940,252,990,252,1050,235,1110,225,1150,235,1230,250,1300,255,1400,270,1500,295]).concat([[680,712],[700,708],[730,697],[780,691],[830,692],[880,693],[930,694],[960,699],[990,696],[1020,691],[1060,691],[1110,689],[1140,693],[1180,698],[1220,704],[1250,707],[1261,707]]), '#48b0b8');
  poly(pd, seg(160, 610, [30,255,80,245,135,232,190,240,245,253,290,245,335,248,385,258,420,243,480,230,550,232,620,232,680,232,720,232,790,214,830,215,870,250,940,262,990,250,1050,225,1110,220,1150,235,1230,255,1300,255,1400,280,1500,312]).concat([[675,714],[690,712],[710,700],[730,693],[780,690],[830,693],[880,692],[930,695],[960,702],[985,694],[1020,688],[1060,690],[1110,688],[1140,695],[1180,700],[1220,706],[1250,710],[1261,705]]), '#e0603c');
  [227, 272, 346, 389, 441, 542, 821, 880, 902, 931, 1049, 1122].forEach(function (x) { arrowDn(pd, x, x > 800 ? 690 : 685, '#1a58dc'); });
  [249, 300, 359, 403, 491, 858, 895, 909, 961, 1079, 1254].forEach(function (x) { arrowUp(pd, x, x > 800 ? 703 : 699, '#8a0c1c'); });
  arrowUp(pd, 689, 714, '#8a0c1c');
  mark(pd, 182, 672, '#e06040'); mark(pd, 267, 672, '#48b0b8');
  text(pd, 188, 676, 'MACD(5,25,5)', '#d85030', 71);
  text(pd, 272, 676, 'Signal', '#40b0c0', 35);
  text(pd, 167, 690, '0.00', '#888', 23);
  text(pd, 1299, 696, '0', '#222');
  frameDecor(pd, 662 - 1, 717);

  /* ---------- Oscillator ---------- */
  var po = document.getElementById('po');
  pane(po, 717, 770);
  var OZ = [396,390,390,390,381,376,380,387,399,408,412,405,402,402,412,420,423,425,405,395,390,387,392,393,400,398,398,395,394,399,404,406,396,396,396,384,387,405,432,444,444,445,447,447,425,417,402,392,390,384,393,405,416,422,432,438,435,433,435,438,442,445,452,456,458,465,477];
  var OS = OZ.map(function (z) { return (413 - z) / 3; }).concat([-19,-20,-17,-15,-11,-8,-5,2,4,5,6,6,6,5,6,5,5,6,5,5,4,3,-1,-3,-4,-5,-5,-3,-2,1,2,3,4,4,3,2,1,1,-1,-2,-3,-2,-1,1,3,5,6,7,8,9,8,8,7,7,6,6,7,7,6,5,3,1,-3,-6,-7,-8,-7,-7,-6,-7,-7,-8,-8,-9,-8,-8,-6,-5,-4,-3,2,-2]);
  OS.forEach(function (v, i) {
    if (i > 149) return;
    var h = Math.max(1, Math.round(Math.abs(v)));
    if (v >= 0) rect(po, X(i) - 3, 748 - h, 7, h, '#f47a84');
    else rect(po, X(i) - 3, 748, 7, h, '#2a8ad6');
  });
  mark(po, 182, 727, '#c83010');
  text(po, 188, 731, 'MACD Oscillator(12,26,9)', '#c83818', 143);
  text(po, 1299, 750, '0', '#222');
  frameDecor(po, 717 - 1, 770);

  /* ---------- time axis ---------- */
  var px = document.getElementById('px');
  rect(px, 161, 770, 1197, 16, '#f0f0f0');
  [[167, '06'], [189, '07'], [350, '08'], [503, '09'], [643, '10'], [782, '11'], [944, '12'], [1253, '02']].forEach(function (p) { text(px, p[0], 782, p[1], '#222', 13); });
  text(px, 1105, 783, '2022/01', '#111', 48, 'tb2');
})();
```
